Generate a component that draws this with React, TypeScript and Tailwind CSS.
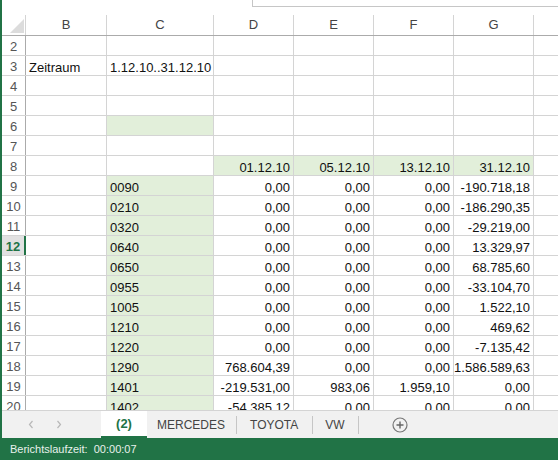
import React from 'react';

const GREEN = 'bg-[#e2efda]';

type Row = {
  n: number;
  b?: string;
  c?: string;
  cGreen?: boolean;
  vals?: string[];
  valsGreen?: boolean;
};

const rows: Row[] = [
  { n: 2 },
  { n: 3, b: 'Zeitraum', c: '1.12.10..31.12.10' },
  { n: 4 },
  { n: 5 },
  { n: 6, cGreen: true },
  { n: 7 },
  { n: 8, vals: ['01.12.10', '05.12.10', '13.12.10', '31.12.10'], valsGreen: true },
  { n: 9, c: '0090', cGreen: true, vals: ['0,00', '0,00', '0,00', '-190.718,18'] },
  { n: 10, c: '0210', cGreen: true, vals: ['0,00', '0,00', '0,00', '-186.290,35'] },
  { n: 11, c: '0320', cGreen: true, vals: ['0,00', '0,00', '0,00', '-29.219,00'] },
  { n: 12, c: '0640', cGreen: true, vals: ['0,00', '0,00', '0,00', '13.329,97'] },
  { n: 13, c: '0650', cGreen: true, vals: ['0,00', '0,00', '0,00', '68.785,60'] },
  { n: 14, c: '0955', cGreen: true, vals: ['0,00', '0,00', '0,00', '-33.104,70'] },
  { n: 15, c: '1005', cGreen: true, vals: ['0,00', '0,00', '0,00', '1.522,10'] },
  { n: 16, c: '1210', cGreen: true, vals: ['0,00', '0,00', '0,00', '469,62'] },
  { n: 17, c: '1220', cGreen: true, vals: ['0,00', '0,00', '0,00', '-7.135,42'] },
  { n: 18, c: '1290', cGreen: true, vals: ['768.604,39', '0,00', '0,00', '1.586.589,63'] },
  { n: 19, c: '1401', cGreen: true, vals: ['-219.531,00', '983,06', '1.959,10', '0,00'] },
  { n: 20, c: '1402', cGreen: true, vals: ['-54.385,12', '0,00', '0,00', '0,00'] },
];

const cell = 'h-full border-r border-[#d4d4d4] flex items-end pb-[1px] leading-none whitespace-nowrap';

function SheetRow({ r }: { r: Row }) {
  const selected = r.n === 12;
  return (
    <div className="flex h-[20px] border-b border-[#d4d4d4] shrink-0">
      <div
        className={`w-[24px] h-full flex items-end justify-center pb-[2px] leading-none text-[13px] ${
          selected
            ? 'bg-[#e1e1e1] text-[#217346] font-bold border-r-2 border-[#217346]'
            : 'text-[#555] border-r border-[#ababab]'
        }`}
      >
        {r.n}
      </div>
      <div className={`${cell} w-[81px] pl-[3px]`}>{r.b}</div>
      <div className={`${cell} w-[107px] pl-[3px] ${r.cGreen ? GREEN : ''}`}>{r.c}</div>
      {[0, 1, 2, 3].map((i) => (
        <div
          key={i}
          className={`${cell} w-[80px] justify-end pr-[3px] ${r.valsGreen ? GREEN : ''}`}
        >
          {r.vals ? r.vals[i] : ''}
        </div>
      ))}
      <div className="flex-1 h-full" />
    </div>
  );
}

export default function App() {
  return (
    <div
      className="w-[558px] h-[460px] flex flex-col overflow-hidden bg-white border-l-2 border-[#217346] text-[#111]"
      style={{ fontFamily: '"Liberation Sans", Arial, sans-serif' }}
    >
      {/* Sheet */}
      <div className="flex-1 min-h-0 overflow-hidden text-[13px]">
        {/* formula bar edge */}
        <div className="h-[15px] flex">
          <div className="w-[250px]" />
          <div className="flex-1 h-[7px] border-l border-b border-[#c6c6c6]" />
        </div>
        {/* Column headers */}
        <div className="flex h-[21px] border-b border-[#ababab] text-[#444] text-[13px] leading-none">
          <div className="w-[24px] h-full border-r border-[#d4d4d4] relative">
            <svg className="absolute left-0 top-0" width="24" height="21" viewBox="0 0 24 21">
              <polygon points="22,4 22,18 8,18" fill="#dcdcdc" />
            </svg>
          </div>
          <div className="w-[81px] h-full border-r border-[#d4d4d4] flex items-end pb-[4px] justify-center">B</div>
          <div className="w-[107px] h-full border-r border-[#d4d4d4] flex items-end pb-[4px] justify-center">C</div>
          {['D', 'E', 'F', 'G'].map((l) => (
            <div key={l} className="w-[80px] h-full border-r border-[#d4d4d4] flex items-end pb-[4px] justify-center">
              {l}
            </div>
          ))}
          <div className="flex-1" />
        </div>
        {rows.map((r) => (
          <SheetRow key={r.n} r={r} />
        ))}
      </div>

      {/* Tab bar */}
      <div className="h-[28px] shrink-0 bg-[#f1f1f1] border-t border-[#d4d4d4] flex items-stretch text-[12px] text-[#444]">
        <div className="w-[99px] flex items-center">
          <svg className="ml-[26px]" width="6" height="9" viewBox="0 0 6 9">
            <path d="M4.5 1 L1.5 4.5 L4.5 8" fill="none" stroke="#b8b8b8" strokeWidth="1.2" />
          </svg>
          <svg className="ml-[22px]" width="6" height="9" viewBox="0 0 6 9">
            <path d="M1.5 1 L4.5 4.5 L1.5 8" fill="none" stroke="#b8b8b8" strokeWidth="1.2" />
          </svg>
        </div>
        <div className="w-[46px] bg-white border-b-2 border-[#217346] flex items-center justify-center font-bold text-[13px] text-[#217346]">
          (2)
        </div>
        <div className="flex items-center pl-[10px] pr-[11px]">MERCEDES</div>
        <div className="w-px h-[18px] self-center bg-[#c6c6c6]" />
        <div className="flex items-center pl-[13px] pr-[14px]">TOYOTA</div>
        <div className="w-px h-[18px] self-center bg-[#c6c6c6]" />
        <div className="flex items-center pl-[12px] pr-[13px]">VW</div>
        <div className="w-px h-[18px] self-center bg-[#c6c6c6]" />
        <div className="flex items-center pl-[33px]">
          <svg width="16" height="16" viewBox="0 0 16 16">
            <circle cx="8" cy="8" r="7" fill="none" stroke="#777" strokeWidth="1.2" />
            <path d="M8 4.5 V11.5 M4.5 8 H11.5" stroke="#666" strokeWidth="1.4" />
          </svg>
        </div>
      </div>

      {/* Status bar */}
      <div className="h-[22px] shrink-0 bg-[#217346] flex items-center pl-[8px] text-[11px] text-[#e8f1ec] whitespace-pre">
        Berichtslaufzeit:  00:00:07
      </div>
    </div>
  );
}
